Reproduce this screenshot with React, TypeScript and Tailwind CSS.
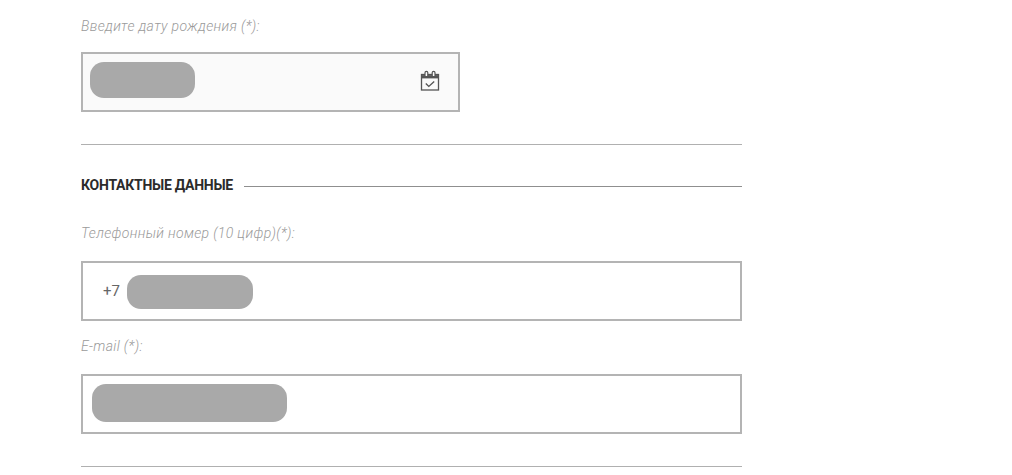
import React from 'react';

const Redacted: React.FC<{ className: string }> = ({ className }) => (
  <div className={`bg-[#a9a9a9] ${className}`} />
);

const FieldLabel: React.FC<{ children: React.ReactNode }> = ({ children }) => (
  <p className="h-[18px] text-[14px] leading-[18px] font-light italic tracking-[0.35px] text-[#9a9a9a]">{children}</p>
);

const CalendarIcon = () => (
  <svg width="22" height="22" viewBox="0 0 22 22" fill="none" stroke="#555555" className="shrink-0 mb-[2px]">
    <rect x="2.5" y="4.5" width="17" height="15.5" strokeWidth="1.3" />
    <path d="M2.5 5.5h17V8h-17z" fill="#555555" strokeWidth="0.8" />
    <path d="M6 6V2.8a1.4 1.4 0 0 1 2.8 0V6M13.2 6V2.8a1.4 1.4 0 0 1 2.8 0V6" strokeWidth="1.2" fill="#fafafa" />
    <path d="M6.8 13.6l3 2.8 5.4-4.8" strokeWidth="1.4" />
  </svg>
);

export default function App() {
  return (
    <div className="w-[1012px] h-[475px] overflow-hidden bg-white font-['Roboto',sans-serif]">
      <div className="w-[661px] ml-[81px] pt-[17px]">
        <FieldLabel>Введите дату рождения (*):</FieldLabel>

        <div className="mt-[17px] w-[379px] h-[60px] border-2 border-[#b4b4b4] bg-[#fafafa] flex items-center justify-between pl-[7px] pr-[17px]">
          <Redacted className="w-[105px] h-[36px] mb-[4px] rounded-[14px]" />
          <CalendarIcon />
        </div>

        <div className="mt-[32px] h-px bg-[#b0b0b0]" />

        <div className="mt-[31px] flex items-center h-[18px] gap-[11px]">
          <h2 className="text-[14px] leading-[18px] font-bold tracking-[-0.26px] text-[#2b2b2b] whitespace-nowrap">КОНТАКТНЫЕ ДАННЫЕ</h2>
          <div className="flex-1 h-px mt-[2px] bg-[#8f8f8f]" />
        </div>

        <div className="mt-[30px]">
          <FieldLabel>Телефонный номер (10 цифр)(*):</FieldLabel>
        </div>

        <div className="mt-[19px] h-[60px] border-2 border-[#b4b4b4] flex items-center pl-[20px]">
          <span className="w-[24px] text-[15px] text-[#666666]">+7</span>
          <Redacted className="w-[126px] h-[34px] mt-[2px] rounded-[14px]" />
        </div>

        <div className="mt-[16px]">
          <FieldLabel>E-mail (*):</FieldLabel>
        </div>

        <div className="mt-[19px] h-[60px] border-2 border-[#b4b4b4] flex items-center pl-[9px]">
          <Redacted className="w-[195px] h-[38px] mb-[2px] rounded-[14px]" />
        </div>

        <div className="mt-[32px] h-px bg-[#b0b0b0]" />
      </div>
    </div>
  );
}
